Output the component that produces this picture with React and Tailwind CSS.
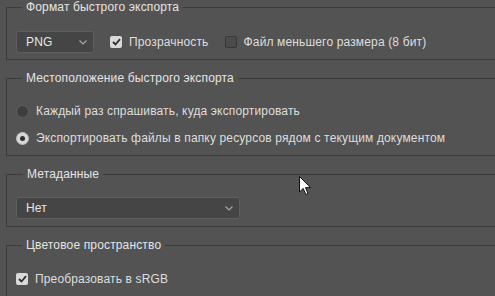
import React from 'react';

const font = { fontFamily: '"Liberation Sans", Arial, sans-serif' };

function Chevron() {
  return (
    <svg width="8" height="5" viewBox="0 0 8 5" className="shrink-0">
      <path d="M0.5 0.5 L4 4 L7.5 0.5" fill="none" stroke="#a8a8a8" strokeWidth="1.1" />
    </svg>
  );
}

function Select({ value, width }) {
  return (
    <div
      className={`flex items-center justify-between h-[22px] pl-[9px] pr-[6px] rounded-[3px] border border-[#5e5e5e] bg-[#454545] text-[#e6e6e6] ${width}`}
    >
      <span>{value}</span>
      <Chevron />
    </div>
  );
}

function Checkbox({ checked, label }) {
  return (
    <label className="flex items-center gap-[7px]">
      {checked ? (
        <span className="flex items-center justify-center w-[12px] h-[12px] rounded-[2px] bg-[#d9d9d9]">
          <svg width="9" height="8" viewBox="0 0 9 8">
            <path d="M1 4 L3.5 6.5 L8 1.2" fill="none" stroke="#2f2f2f" strokeWidth="1.8" />
          </svg>
        </span>
      ) : (
        <span className="w-[12px] h-[12px] rounded-[2px] border border-[#363636] bg-[#4c4c4c]" />
      )}
      <span>{label}</span>
    </label>
  );
}

function Radio({ checked, label }) {
  return (
    <label className="flex items-center gap-[7px] h-[16px]">
      {checked ? (
        <span className="flex items-center justify-center w-[13px] h-[13px] rounded-full bg-[#d6d6d6] border border-[#bdbdbd]">
          <span className="w-[5px] h-[5px] rounded-full bg-[#2e2e2e]" />
        </span>
      ) : (
        <span className="w-[13px] h-[13px] rounded-full bg-[#3e3e3e] border border-[#5f5f5f]" />
      )}
      <span>{label}</span>
    </label>
  );
}

function Group({ title, children, className, legendClass = 'ml-[6px]' }) {
  return (
    <fieldset className={`w-[520px] border border-[#3c3c3c] pl-[9px] ${className}`}>
      <legend className={`px-[4px] leading-[14px] text-[#e4e4e4] ${legendClass}`}>{title}</legend>
      {children}
    </fieldset>
  );
}

export default function App() {
  return (
    <div
      className="relative w-[495px] h-[296px] overflow-hidden bg-[#535353] text-[12px] leading-[16px] tracking-[0.15px] text-[#dedede] pl-[6px]"
      style={font}
    >
      {/* Формат */}
      <Group title="Формат быстрого экспорта" className="pt-[17px] pb-[6px]">
        <div className="flex items-center">
          <Select value="PNG" width="w-[78px]" />
          <div className="ml-[16px]">
            <Checkbox checked label="Прозрачность" />
          </div>
          <div className="ml-[16px]">
            <Checkbox label="Файл меньшего размера (8 бит)" />
          </div>
        </div>
      </Group>

      {/* Местоположение */}
      <Group title="Местоположение быстрого экспорта" className="mt-[11px] pt-[18px] pb-[9px]">
        <div className="flex flex-col gap-[11px]">
          <Radio label="Каждый раз спрашивать, куда экспортировать" />
          <Radio checked label="Экспортировать файлы в папку ресурсов рядом с текущим документом" />
        </div>
      </Group>

      {/* Метаданные */}
      <Group title="Метаданные" className="mt-[11px] pt-[16px] pb-[7px]" legendClass="ml-[7px]">
        <Select value="Нет" width="w-[224px]" />
      </Group>

      {/* Цветовое пространство */}
      <Group title="Цветовое пространство" className="mt-[11px] pt-[19px] pb-[10px]">
        <Checkbox checked label="Преобразовать в sRGB" />
      </Group>

      {/* cursor */}
      <svg className="absolute left-[299px] top-[176px]" width="13" height="20" viewBox="0 0 13 20">
        <path d="M0.5 0.5 L0.5 16 L4.2 12.4 L6.8 18.5 L9 17.5 L6.5 11.6 L11.5 11.6 Z" fill="#ffffff" stroke="#111111" strokeWidth="1" />
      </svg>
    </div>
  );
}
